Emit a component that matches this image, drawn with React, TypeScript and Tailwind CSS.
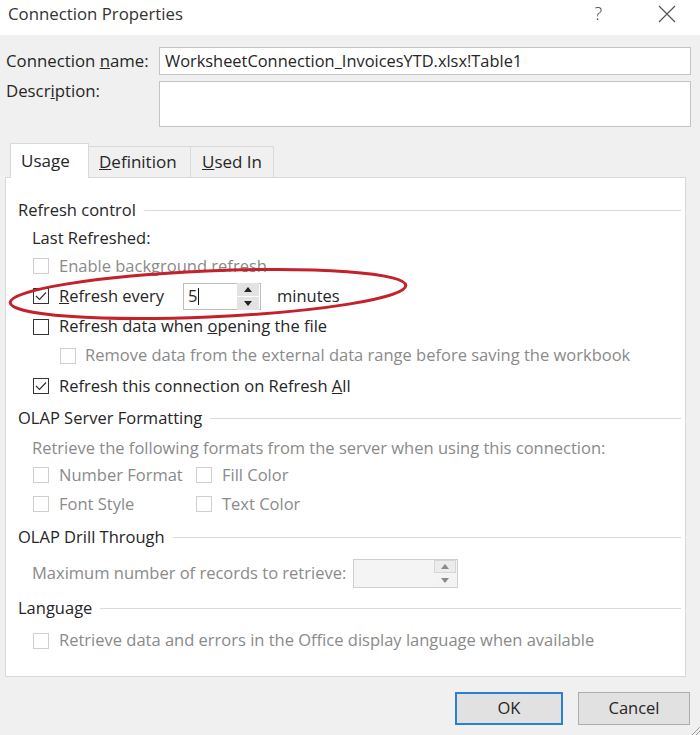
import React from 'react'

const font = "font-['Open_Sans','Noto_Sans',sans-serif]"

function Check({ checked = false, disabled = false }: { checked?: boolean; disabled?: boolean }) {
  return (
    <span
      className={`flex h-[16px] w-[16px] shrink-0 items-center justify-center border bg-white ${
        disabled ? 'border-[#cfcfcf]' : 'border-[#333333]'
      }`}
    >
      {checked && (
        <svg width="12" height="10" viewBox="0 0 12 10">
          <path d="M1 5 L4.5 8.5 L11 1.5" fill="none" stroke="#333" strokeWidth="1.2" />
        </svg>
      )}
    </span>
  )
}

function GroupLabel({ text }: { text: string }) {
  return (
    <div className="flex items-center gap-2 pr-[4px]">
      <span className="text-[#262626]">{text}</span>
      <span className="h-px flex-1 bg-[#dadada]" />
    </div>
  )
}

function SpinArrows({ disabled = false }: { disabled?: boolean }) {
  const c = disabled ? '#8a8a8a' : '#222'
  return (
    <div className="flex w-[22px] flex-col gap-px">
      <div className={`flex h-[13px] items-center justify-center ${disabled ? 'bg-[#ececec] border border-[#d6d6d6]' : 'bg-[#e3e3e3]'}`}>
        <svg width="8" height="5" viewBox="0 0 8 5">
          <path d="M0 5 L4 0 L8 5 Z" fill={c} />
        </svg>
      </div>
      <div className={`flex h-[13px] items-center justify-center ${disabled ? 'bg-[#f3f3f3]' : 'bg-[#e3e3e3]'}`}>
        <svg width="8" height="5" viewBox="0 0 8 5">
          <path d="M0 0 L4 5 L8 0 Z" fill={c} />
        </svg>
      </div>
    </div>
  )
}

export default function App() {
  return (
    <div className={`relative h-[735px] w-[700px] overflow-hidden bg-[#f0f0f0] text-[16.5px] text-[#262626] ${font}`}>
      {/* title bar */}
      <div className="flex h-[35px] items-start bg-white pl-[8px] pr-[24px] pt-[1px]">
        <span className="text-[16.8px] text-[#333]">Connection Properties</span>
        <span className="ml-auto mr-[56px] text-[18px] font-light leading-[24px] text-[#444]">?</span>
        <svg className="mt-[4px]" width="18" height="18" viewBox="0 0 18 18">
          <path d="M1 1 L17 17 M17 1 L1 17" stroke="#555" strokeWidth="1.2" />
        </svg>
      </div>

      {/* name / description */}
      <div className="flex flex-col gap-[6px] pl-[6px] pr-[9px] pt-[12px]">
        <div className="flex items-center">
          <span className="w-[153px] text-[16.8px]">
            Connection <u>n</u>ame:
          </span>
          <div className="flex h-[28px] flex-1 items-center border border-[#c4c4c4] bg-white pl-[5px] text-[16.4px]">
            WorksheetConnection_InvoicesYTD.xlsx!Table1
          </div>
        </div>
        <div className="flex items-start">
          <span className="w-[153px] text-[16.8px] leading-[20px]">
            Descr<u>i</u>ption:
          </span>
          <div className="h-[46px] flex-1 border border-[#c4c4c4] bg-white" />
        </div>
      </div>

      {/* tabs */}
      <div className="mt-[16px] flex h-[34px] items-end pl-[10px] text-[17px]">
        <div className="relative z-10 -mb-px flex h-[35px] w-[79px] items-center border border-b-0 border-[#d9d9d9] bg-white pl-[10px]">
          Usa<u>g</u>e
        </div>
        <div className="flex h-[31px] w-[102px] items-center border border-b-0 border-l-0 border-[#d9d9d9] pl-[10px]">
          <u>D</u>efinition
        </div>
        <div className="flex h-[31px] w-[83px] items-center border border-b-0 border-l-0 border-[#d9d9d9] pl-[11px]">
          <u>U</u>sed In
        </div>
      </div>

      {/* panel */}
      <div className="ml-[5px] flex h-[500px] w-[681px] flex-col border border-[#d9d9d9] bg-white pl-[12px] pt-[16px]">
        <div className="h-[30px] pt-[4px]">
          <GroupLabel text="Refresh control" />
        </div>
        <div className="flex h-[28px] items-center pl-[14px]">Last Refreshed:</div>
        <div className="flex h-[28px] items-center gap-[10px] pl-[15px] text-[#8a8a8a]">
          <Check disabled />
          Enable background refresh
        </div>
        <div className="flex h-[32px] items-center pl-[15px]">
          <Check checked />
          <span className="ml-[10px] w-[124px]">
            <u>R</u>efresh every
          </span>
          <div className="flex h-[27px] w-[78px] items-center gap-[2px] border border-[#bdbdbd] bg-white pl-[4px] pr-px">
            <span className="flex flex-1 items-center">
              5<span className="ml-px h-[17px] w-px bg-[#111]" />
            </span>
            <SpinArrows />
          </div>
          <span className="ml-[16px]">minutes</span>
        </div>
        <div className="flex h-[29px] items-center gap-[10px] pl-[15px]">
          <Check />
          <span>
            Refresh data when <u>o</u>pening the file
          </span>
        </div>
        <div className="flex h-[29px] items-center gap-[9px] pl-[42px] text-[#8a8a8a]">
          <Check disabled />
          Remove data from the external data range before saving the workbook
        </div>
        <div className="flex h-[32px] items-center gap-[10px] pl-[15px]">
          <Check checked />
          <span>
            Refresh this connection on Refresh <u>A</u>ll
          </span>
        </div>

        <div className="flex h-[32px] items-center">
          <div className="flex-1">
            <GroupLabel text="OLAP Server Formatting" />
          </div>
        </div>
        <div className="flex h-[28px] items-center pl-[14px] text-[#8a8a8a]">
          Retrieve the following formats from the server when using this connection:
        </div>
        <div className="flex h-[26px] items-center pl-[15px] text-[#8a8a8a]">
          <div className="flex w-[163px] items-center gap-[10px]">
            <Check disabled />
            Number Format
          </div>
          <div className="flex items-center gap-[10px]">
            <Check disabled />
            Fill Color
          </div>
        </div>
        <div className="flex h-[32px] items-center pl-[15px] text-[#8a8a8a]">
          <div className="flex w-[163px] items-center gap-[10px]">
            <Check disabled />
            Font Style
          </div>
          <div className="flex items-center gap-[10px]">
            <Check disabled />
            Text Color
          </div>
        </div>

        <div className="flex h-[35px] items-center">
          <div className="flex-1">
            <GroupLabel text="OLAP Drill Through" />
          </div>
        </div>
        <div className="flex h-[36px] items-center pl-[14px] text-[#8a8a8a]">
          <span className="w-[321px]">Maximum number of records to retrieve:</span>
          <div className="flex h-[29px] w-[105px] items-center border border-[#cfcfcf] bg-[#f4f4f4] pr-px">
            <span className="flex-1" />
            <SpinArrows disabled />
          </div>
        </div>

        <div className="flex h-[34px] items-center">
          <div className="flex-1">
            <GroupLabel text="Language" />
          </div>
        </div>
        <div className="flex h-[31px] items-center gap-[10px] pl-[15px] text-[#8a8a8a]">
          <Check disabled />
          Retrieve data and errors in the Office display language when available
        </div>
      </div>

      {/* buttons */}
      <div className="mt-[15px] flex justify-end gap-[15px] pr-[10px] text-[16.5px]">
        <button className="flex h-[33px] w-[108px] items-center justify-center border-2 border-[#2a7fd0] bg-[#e1e1e1]">
          OK
        </button>
        <button className="flex h-[33px] w-[112px] items-center justify-center border border-[#adadad] bg-[#e1e1e1]">
          Cancel
        </button>
      </div>

      {/* resize grip */}
      <svg className="absolute bottom-0 right-0" width="10" height="10" viewBox="0 0 10 10">
        <path d="M10 2 L2 10 M10 6 L6 10" stroke="#9a9a9a" strokeWidth="1" />
      </svg>

      {/* red annotation ellipse */}
      <svg className="pointer-events-none absolute left-0 top-[262px]" width="420" height="66" viewBox="0 0 420 66">
        <ellipse cx="208" cy="32" rx="198" ry="23" transform="rotate(-2.5 208 32)" fill="none" stroke="#c4212b" strokeWidth="3" />
      </svg>
    </div>
  )
}
